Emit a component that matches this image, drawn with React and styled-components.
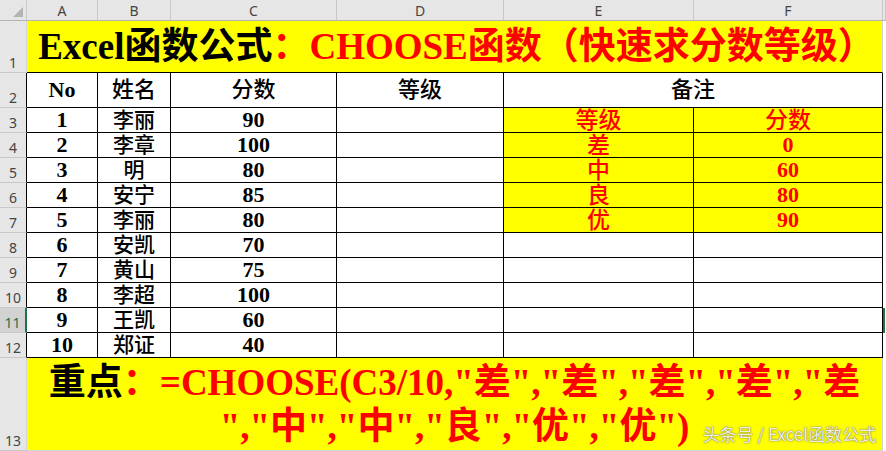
import React from "react";
import styled, { createGlobalStyle } from "styled-components";

const Global = createGlobalStyle`
  html, body { margin: 0; padding: 0; background: #fff; }
  body { width: 886px; height: 451px; overflow: hidden; }
`;

const SERIF = `"Liberation Serif", "Noto Sans CJK SC", serif`;
const UI = `"Noto Sans", "Noto Sans CJK SC", sans-serif`;
const BLACK = "#000";
const GRID = "#d4d4d4";

const Sheet = styled.div`
  position: relative;
  display: grid;
  grid-template-columns: 27px 71px 73px 166px 167px 190px 189px 3px;
  grid-template-rows: 21px 52px 35px repeat(10, 25px) 93px;
  width: 886px;
  height: 451px;
  background: #fff;
  overflow: hidden;
`;

const Corner = styled.div`
  position: relative;
  background: #e6e6e6;
  border-right: 1px solid #c8c8c8;
  border-bottom: 1px solid #b4b4b4;
  box-sizing: border-box;
  display: flex;
  align-items: flex-end;
  justify-content: flex-end;
  padding: 0 3px 3px 0;
`;

const ColHead = styled.div`
  background: ${(p) => (p.$sel ? "#d2d2d2" : "#e6e6e6")};
  border-right: 1px solid #c8c8c8;
  border-bottom: ${(p) => (p.$sel ? "2px solid #217346" : "1px solid #b4b4b4")};
  box-sizing: border-box;
  display: flex;
  align-items: center;
  justify-content: center;
  font-family: ${UI};
  font-size: 14px;
  color: #444;
`;

const RowHead = styled.div`
  background: ${(p) => (p.$sel ? "#d2d2d2" : "#e6e6e6")};
  border-right: ${(p) => (p.$sel ? "2px solid #217346" : `1px solid ${p.$edge}`)};
  border-bottom: 1px solid #c8c8c8;
  box-sizing: border-box;
  display: flex;
  align-items: flex-end;
  justify-content: center;
  font-family: ${UI};
  font-size: 14px;
  line-height: 18px;
  color: ${(p) => (p.$sel ? "#217346" : "#444")};
`;

const Cell = styled.div`
  grid-column: span ${(p) => p.$span || 1};
  background: ${(p) => p.$bg || "#fff"};
  border-right: 1px solid ${(p) => p.$br || GRID};
  border-bottom: 1px solid ${(p) => p.$bb || GRID};
  box-sizing: border-box;
  display: flex;
  align-items: center;
  justify-content: center;
  overflow: visible;
  white-space: nowrap;
  font-family: ${SERIF};
  font-size: ${(p) => p.$size || 22}px;
  font-weight: ${(p) => p.$weight || 700};
  color: ${(p) => p.$color || "#000"};
  line-height: 1;
`;

const Edge = styled.div`
  background: #fff;
  border-left: ${(p) => (p.$sel ? "2px solid #217346" : "none")};
  box-sizing: border-box;
`;

const Title = styled(Cell)`
  font-size: 37px;
  font-weight: 700;
  padding: 0 0 1px 4px;
`;

const Red = styled.span`
  color: #ff0000;
`;

const Note = styled(Cell)`
  flex-direction: column;
  justify-content: flex-start;
  padding-top: 5px;
  font-size: 37px;
  color: #ff0000;
  gap: 4px;
`;

const NoteLine = styled.div`
  line-height: 40px;
  white-space: nowrap;
`;

const Ink = styled.span`
  color: #000;
`;

const Watermark = styled.div`
  position: absolute;
  right: 10px;
  bottom: 5px;
  font-family: "Noto Sans CJK SC", "Noto Sans", sans-serif;
  font-size: 17px;
  color: rgba(255, 255, 255, 0.9);
  text-shadow: 0 0 1px rgba(90, 90, 90, 0.9), 0 0 2px rgba(90, 90, 90, 0.6);
  white-space: nowrap;
`;

const CJK = { $weight: 500, $size: 21 };

const people = [
  [1, "李丽", 90],
  [2, "李章", 100],
  [3, "明", 80],
  [4, "安宁", 85],
  [5, "李丽", 80],
  [6, "安凯", 70],
  [7, "黄山", 75],
  [8, "李超", 100],
  [9, "王凯", 60],
  [10, "郑证", 40],
];

const grades = [
  ["等级", "分数"],
  ["差", "0"],
  ["中", "60"],
  ["良", "80"],
  ["优", "90"],
];

const cols = ["A", "B", "C", "D", "E", "F"];

export default function App() {
  return (
    <>
      <Global />
      <Sheet>
        <Corner>
          <svg width="10" height="10" viewBox="0 0 10 10">
            <polygon points="10,0 10,10 0,10" fill="#b4b4b4" />
          </svg>
        </Corner>
        {cols.map((c) => (
          <ColHead key={c}>{c}</ColHead>
        ))}
        <ColHead />

        <RowHead $edge={GRID}>1</RowHead>
        <Title $span={6} $bg="#ffff00" $bb={BLACK}>
          Excel函数公式<Red>：CHOOSE函数（快速求分数等级）</Red>
        </Title>
        <Edge />

        <RowHead $edge={BLACK}>2</RowHead>
        <Cell $br={BLACK} $bb={BLACK}>No</Cell>
        <Cell $br={BLACK} $bb={BLACK} {...CJK} $size={22}>姓名</Cell>
        <Cell $br={BLACK} $bb={BLACK} {...CJK} $size={22}>分数</Cell>
        <Cell $br={BLACK} $bb={BLACK} {...CJK} $size={22}>等级</Cell>
        <Cell $span={2} $br={BLACK} $bb={BLACK} {...CJK} $size={22}>备注</Cell>
        <Edge />

        {people.map(([no, name, score], i) => {
          const r = i + 3;
          const g = grades[i];
          return (
            <React.Fragment key={r}>
              <RowHead $edge={BLACK} $sel={r === 11}>{r}</RowHead>
              <Cell $br={BLACK} $bb={BLACK}>{no}</Cell>
              <Cell $br={BLACK} $bb={BLACK} {...CJK}>{name}</Cell>
              <Cell $br={BLACK} $bb={BLACK}>{score}</Cell>
              <Cell $br={BLACK} $bb={BLACK} />
              {g ? (
                <>
                  <Cell $br={BLACK} $bb={BLACK} $bg="#ffff00" $color="#ff0000" {...CJK} $size={23}>
                    {g[0]}
                  </Cell>
                  <Cell
                    $br={BLACK}
                    $bb={BLACK}
                    $bg="#ffff00"
                    $color="#ff0000"
                    {...(i === 0 ? { ...CJK, $size: 23 } : {})}
                  >
                    {g[1]}
                  </Cell>
                </>
              ) : (
                <>
                  <Cell $br={BLACK} $bb={BLACK} />
                  <Cell $br={BLACK} $bb={BLACK} />
                </>
              )}
              <Edge $sel={r === 11} />
            </React.Fragment>
          );
        })}

        <RowHead $edge={GRID}>13</RowHead>
        <Note $span={6} $bg="#ffff00">
          <NoteLine>
            <Ink>重点</Ink>：=CHOOSE(C3/10,"差","差","差","差","差
          </NoteLine>
          <NoteLine>","中","中","良","优","优")</NoteLine>
        </Note>
        <Edge />

        <Watermark>头条号 / Excel函数公式</Watermark>
      </Sheet>
    </>
  );
}
